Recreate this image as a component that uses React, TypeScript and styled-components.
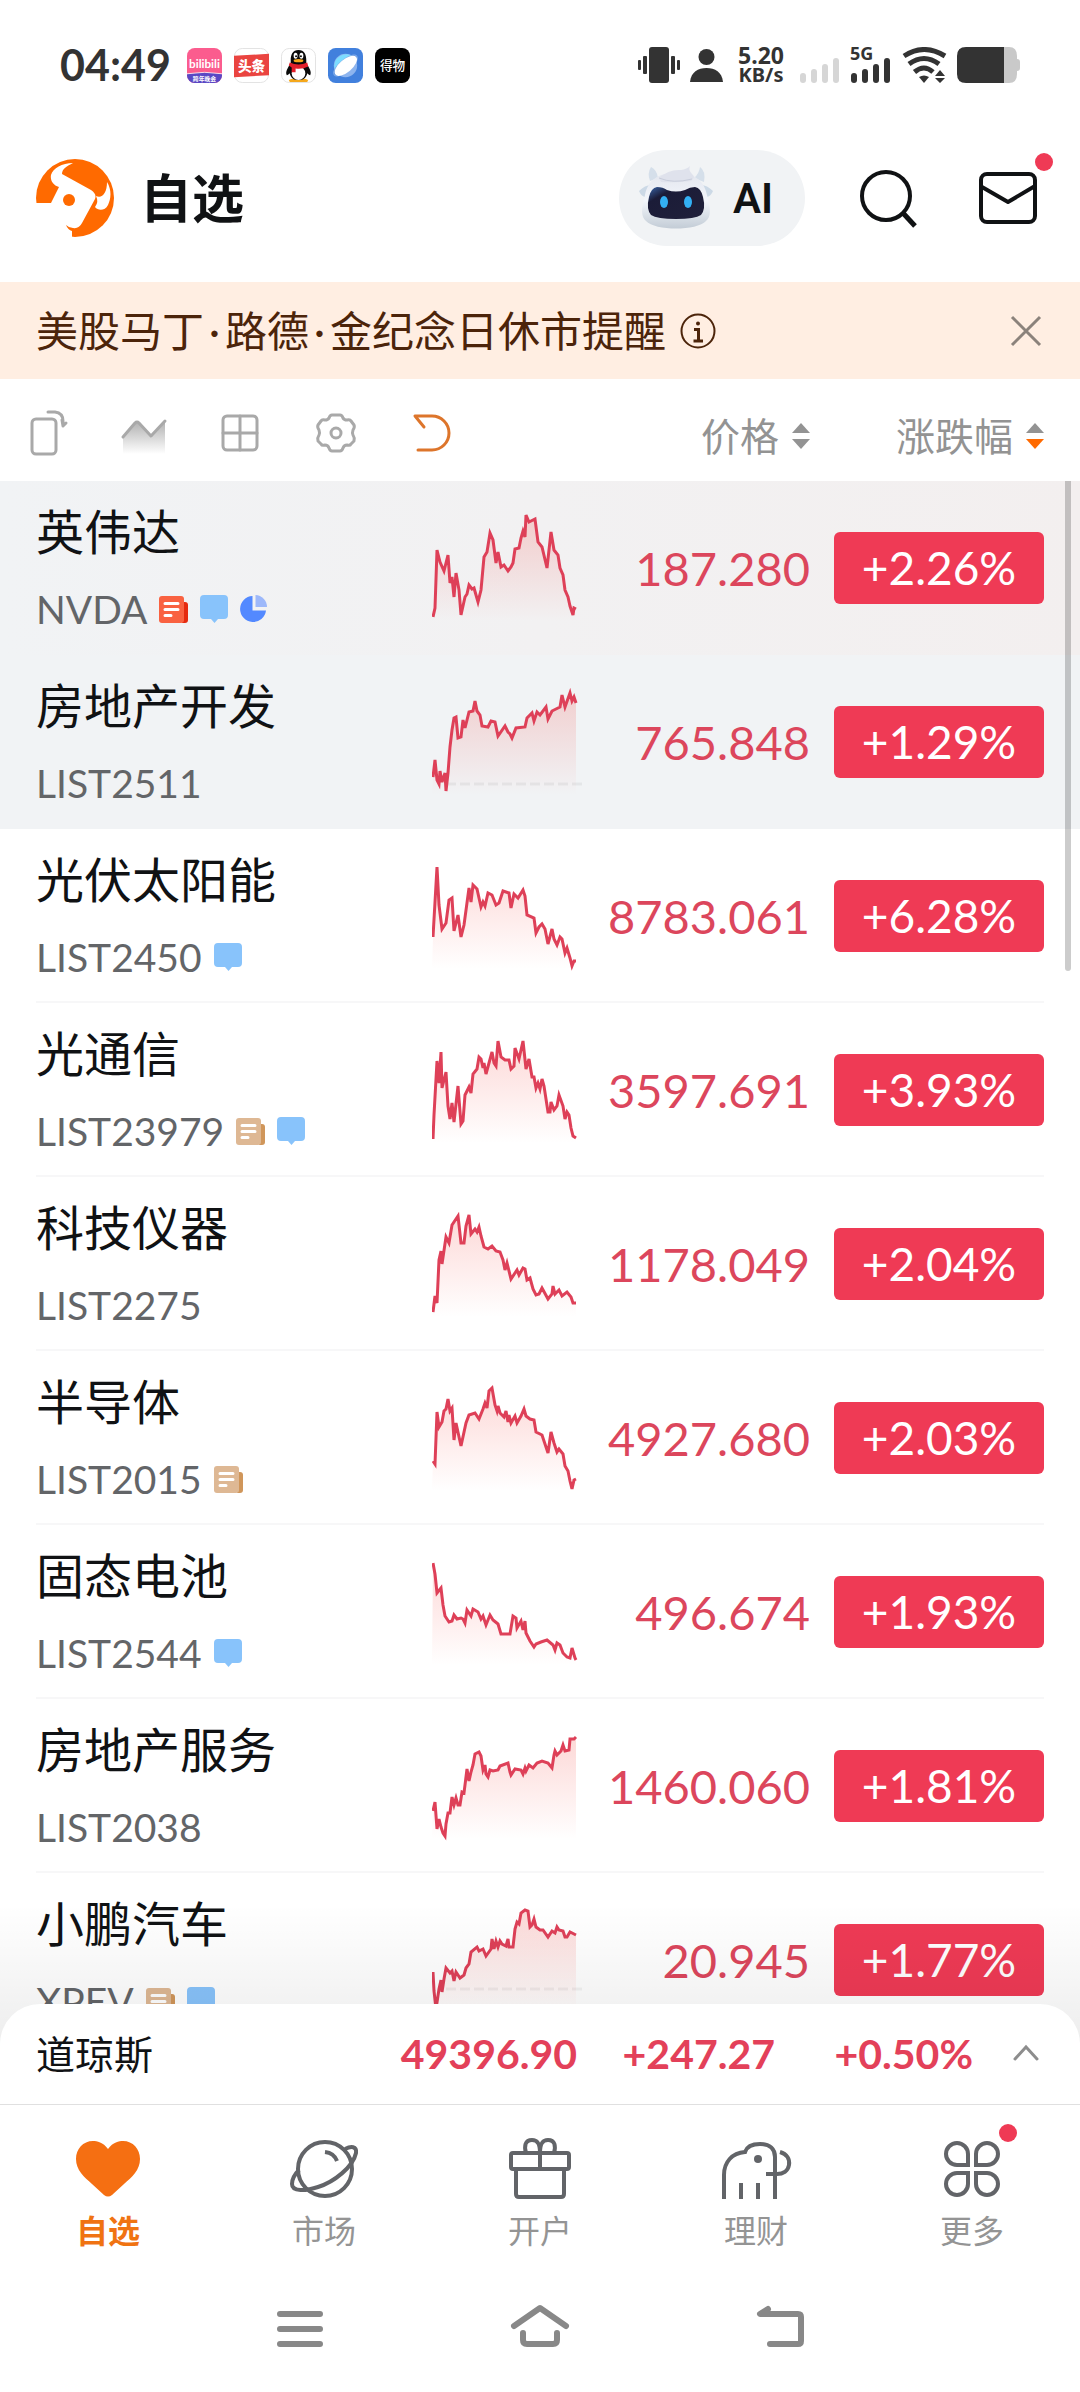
import React from "react";
import styled, { createGlobalStyle } from "styled-components";

const RED = "#ef3a55";
const PRICE_RED = "#dc465c";
const ORANGE = "#ff6a00";

const GlobalStyle = createGlobalStyle`
  * { box-sizing: border-box; }
  body {
    margin: 0;
    background: #fff;
    color: #101214;
    font-family: Lato, "Noto Sans CJK SC", sans-serif;
  }
  button {
    margin: 0;
    padding: 0;
    border: 0;
    background: none;
    color: inherit;
    font: inherit;
    cursor: pointer;
  }
  svg { display: block; flex: none; }
`;

const Page = styled.div`
  display: flex;
  flex-direction: column;
  height: 100vh;
  overflow: hidden;
`;

/* ---------- status bar ---------- */

const StatusBar = styled.div`
  display: flex;
  flex: none;
  align-items: center;
  justify-content: space-between;
  height: 130px;
  padding: 0 60px;
  color: #333;
`;

const StatusGroup = styled.div<{ $gap: number }>`
  display: flex;
  align-items: center;
  gap: ${(p) => p.$gap}px;
`;

const Clock = styled.time`
  margin-right: 4px;
  font-size: 43px;
  font-weight: 700;
  line-height: 48px;
`;

const Speed = styled.div`
  display: flex;
  flex-direction: column;
  width: 56px;
  font-family: "Noto Sans", sans-serif;
  font-weight: 700;
  line-height: 20px;
  text-align: center;
`;

const SpeedValue = styled.span`
  font-size: 23px;
`;

const SpeedUnit = styled.span`
  font-size: 20px;
`;

/* ---------- header ---------- */

const Header = styled.header`
  display: flex;
  flex: none;
  align-items: center;
  justify-content: space-between;
  padding: 20px 39px 36px 36px;
`;

const Brand = styled.div`
  display: flex;
  align-items: center;
  gap: 26px;
`;

const Title = styled.h1`
  margin: 0;
  font-size: 52px;
  font-weight: 700;
  line-height: 64px;
`;

const Actions = styled.div`
  display: flex;
  align-items: center;
  gap: 52px;
`;

const AiButton = styled.button`
  display: flex;
  align-items: center;
  gap: 20px;
  height: 96px;
  padding: 0 32px 0 20px;
  border-radius: 48px;
  background: #f1f3f5;
  font-family: Roboto, sans-serif;
  font-size: 42px;
  font-weight: 600;
`;

const IconButton = styled.button`
  position: relative;
  flex: none;
`;

const Dot = styled.span<{ $top: number; $right: number }>`
  position: absolute;
  top: ${(p) => p.$top}px;
  right: ${(p) => p.$right}px;
  width: 18px;
  height: 18px;
  border-radius: 50%;
  background: ${RED};
`;

/* ---------- notice ---------- */

const Notice = styled.div`
  display: flex;
  flex: none;
  align-items: center;
  height: 97px;
  padding: 0 36px;
  background: #ffeee2;
  color: #4c240a;
`;

const NoticeText = styled.p`
  margin: 0 14px 0 0;
  font-size: 42px;
  line-height: 56px;
`;

const MidDot = styled.span`
  padding: 0 5px;
`;

const CloseButton = styled.button`
  margin-left: auto;
`;

/* ---------- quote table ---------- */

const ListArea = styled.main`
  position: relative;
  flex: 1 1 0;
  min-height: 0;
  overflow: hidden;
`;

const Table = styled.table`
  display: block;
  width: 100%;
`;

const Head = styled.thead`
  display: block;
`;

const Body = styled.tbody`
  display: block;
`;

const HeadRow = styled.tr`
  display: grid;
  grid-template-columns: minmax(0, 1fr) 252px 210px;
  align-items: center;
  height: 102px;
  padding: 0 36px 0 24px;
`;

const HeadCell = styled.th<{ $inset?: boolean }>`
  display: flex;
  justify-content: flex-end;
  padding: 12px ${(p) => (p.$inset ? 24 : 0)}px 0 0;
  color: #939393;
  font-size: 39px;
  font-weight: 400;
  line-height: 52px;
`;

const Tools = styled.th`
  display: flex;
  gap: 48px;
  padding: 4px 0 0;
`;

const SortButton = styled.button`
  display: flex;
  align-items: center;
  gap: 13px;
`;

const Row = styled.tr<{ $tone: "plain" | "pinned" | "active" }>`
  display: grid;
  grid-template-columns: minmax(0, 1fr) 150px 252px 210px;
  align-items: center;
  height: 174px;
  padding: 0 36px;
  background: ${(p) =>
    p.$tone === "active"
      ? "linear-gradient(90deg, #f1f3f5, #f3efef)"
      : p.$tone === "pinned"
        ? "#f1f3f5"
        : "linear-gradient(#f7f7f8, #f7f7f8) bottom / 100% 2px no-repeat content-box"};
`;

const NameCell = styled.th`
  padding: 0;
  font-weight: 400;
  text-align: left;
`;

const Name = styled.div`
  font-size: 48px;
  line-height: 66px;
`;

const CodeLine = styled.div`
  display: flex;
  align-items: center;
  gap: 12px;
  margin-top: 16px;
  color: #636568;
  font-size: 39px;
  line-height: 56px;
`;

const Cell = styled.td`
  padding: 0;
`;

const Price = styled.td`
  padding: 0 24px 0 0;
  color: ${PRICE_RED};
  font-size: 47px;
  line-height: 56px;
  text-align: right;
`;

const Change = styled.span`
  display: block;
  height: 72px;
  border-radius: 6px;
  background: ${RED};
  color: #fff;
  font-size: 46px;
  line-height: 72px;
  text-align: center;
`;

const ScrollThumb = styled.div`
  position: absolute;
  top: 102px;
  right: 9px;
  width: 6px;
  height: 490px;
  border-radius: 0 0 3px 3px;
  background: rgba(0, 0, 0, 0.2);
`;

const Fade = styled.div`
  position: absolute;
  right: 0;
  bottom: 0;
  left: 0;
  height: 140px;
  background: linear-gradient(rgba(0, 0, 0, 0), rgba(0, 0, 0, 0.07));
`;

/* ---------- index strip ---------- */

const IndexStrip = styled.section`
  position: relative;
  display: grid;
  flex: none;
  grid-template-columns: minmax(0, 1fr) auto 198px 198px 71px;
  align-items: center;
  height: 100px;
  margin-top: -40px;
  padding: 0 36px;
  border-radius: 40px 40px 0 0;
  background: #fff;
  font-size: 39px;
  line-height: 52px;
`;

const IndexValue = styled.span`
  color: #e34059;
  font-size: 41px;
  font-weight: 700;
  text-align: right;
`;

const ExpandButton = styled.button`
  justify-self: end;
`;

/* ---------- bottom bars ---------- */

const TabBar = styled.nav`
  display: grid;
  flex: none;
  grid-template-columns: repeat(5, 1fr);
  padding-top: 32px;
  border-top: 1px solid #e0e0e0;
`;

const Tab = styled.button<{ $active?: boolean }>`
  display: flex;
  flex-direction: column;
  align-items: center;
  gap: 9px;
  color: ${(p) => (p.$active ? "#f07312" : "#949494")};
  font-size: 32px;
  font-weight: ${(p) => (p.$active ? 700 : 400)};
  line-height: 40px;
`;

const TabIcon = styled.span`
  position: relative;
`;

const SystemNav = styled.nav`
  display: flex;
  flex: none;
  justify-content: center;
  gap: 180px;
  padding: 51px 0 42px;
`;

/* ---------- drawings ---------- */

const AppTile = ({ children, label }: { children: React.ReactNode; label: string }) => (
  <svg width="35" height="35" viewBox="0 0 36 36" role="img" aria-label={label}>
    {children}
  </svg>
);

const tileFont = '"Noto Sans CJK SC", sans-serif';

const AppIcons = () => (
  <>
    <AppTile label="bilibili">
      <defs>
        <clipPath id="tile"><rect width="36" height="36" rx="8" /></clipPath>
      </defs>
      <g clipPath="url(#tile)">
        <rect width="36" height="36" fill="#fb5c8e" />
        <path d="M0 27Q18 24 36 27V36H0Z" fill="#5a48c4" />
        <path d="M0 26.500Q18 23.500 36 26.500" stroke="#fff" fill="none" strokeWidth="0.800" />
        <text x="18" y="21" fontSize="12" fontWeight="700" textAnchor="middle" fill="#fff" fontFamily="Lato">bilibili</text>
        <text x="18" y="34" fontSize="6" fontWeight="700" textAnchor="middle" fill="#fff" fontFamily={tileFont}>跨年晚会</text>
      </g>
    </AppTile>
    <AppTile label="头条">
      <rect x="0.500" y="0.500" width="35" height="35" rx="8" fill="#fff" stroke="#e2e2e2" />
      <path d="M0 8L36 6V28L0 30Z" fill="#ea4440" />
      <text x="18" y="24" fontSize="14" fontWeight="900" textAnchor="middle" fill="#fff" fontFamily={tileFont}>头条</text>
    </AppTile>
    <AppTile label="QQ">
      <rect x="0.500" y="0.500" width="35" height="35" rx="8" fill="#fff" stroke="#e2e2e2" />
      <path d="M8 33Q13 30 18 33Q23 30 28 33L27 35H9Z" fill="#f5a81c" />
      <path d="M18 2C12 2 10 7 10 12V16C7 20 4 25 6 28C7 28 8 27 9 26C10 31 13 33 18 33S26 31 27 26C28 27 29 28 30 28C32 25 29 20 26 16V12C26 7 24 2 18 2Z" fill="#0a0a0a" />
      <ellipse cx="18" cy="26" rx="7" ry="7" fill="#fff" />
      <ellipse cx="15" cy="8" rx="2" ry="3" fill="#fff" />
      <ellipse cx="21" cy="8" rx="2" ry="3" fill="#fff" />
      <circle cx="15.500" cy="8.500" r="1" />
      <circle cx="20.500" cy="8.500" r="1" />
      <ellipse cx="18" cy="13" rx="5" ry="1.600" fill="#f5a81c" />
      <path d="M9 15Q18 19 27 15L28 19Q22 22 15 21V25H11V20L8 18Z" fill="#e3202b" />
    </AppTile>
    <AppTile label="浏览器">
      <rect width="36" height="36" rx="8" fill="#4180dd" />
      <circle cx="18" cy="18" r="12" fill="#8db4ee" />
      <path d="M7 22A12 12 0 0 1 27 10Z" fill="#7cdcff" />
      <ellipse cx="18" cy="18" rx="15" ry="6" fill="none" stroke="#84aee9" transform="rotate(-40 18 18)" />
      <ellipse cx="18" cy="18.500" rx="14" ry="6.500" fill="#fff" transform="rotate(-40 18 18)" />
    </AppTile>
    <AppTile label="得物">
      <rect width="36" height="36" rx="8" fill="#000" />
      <text x="18" y="23" fontSize="13" fontWeight="500" textAnchor="middle" fill="#fff" fontFamily={tileFont}>得物</text>
    </AppTile>
  </>
);

const Bars = ({ color }: { color: string }) => (
  <g fill={color}>
    <rect x="1" y="26" width="6" height="10" rx="3" />
    <rect x="12" y="22" width="6" height="14" rx="3" />
    <rect x="23" y="17" width="6" height="19" rx="3" />
    <rect x="34" y="11" width="6" height="25" rx="3" />
  </g>
);

const SystemIcons = () => (
  <>
    <svg width="42" height="36" viewBox="0 0 42 36" fill="#333" aria-hidden="true">
      <rect x="11" width="20" height="36" rx="3" />
      <rect x="5" y="9" width="4" height="18" rx="1" />
      <rect x="33" y="9" width="4" height="18" rx="1" />
      <rect y="13" width="3" height="10" rx="1" />
      <rect x="39" y="13" width="3" height="10" rx="1" />
    </svg>
    <svg width="33" height="36" viewBox="0 0 33 36" fill="#333" aria-hidden="true">
      <circle cx="16.500" cy="10" r="8" />
      <path d="M0 35C1 25 8 21 16.500 21S32 25 33 35Z" />
    </svg>
    <Speed>
      <SpeedValue>5.20</SpeedValue>
      <SpeedUnit>KB/s</SpeedUnit>
    </Speed>
    <svg width="41" height="36" viewBox="0 0 41 36" aria-hidden="true"><Bars color="#d6d6d6" /></svg>
    <svg width="42" height="44" viewBox="0 -4 42 44" aria-hidden="true">
      <text x="0" y="13" fontSize="18" fontWeight="700" fill="#333" fontFamily="Noto Sans">5G</text>
      <Bars color="#333" />
    </svg>
    <svg width="45" height="36" viewBox="0 0 45 36" fill="none" stroke="#333" strokeWidth="5" aria-hidden="true">
      <path d="M2 9Q22 -4 43 9M7 17Q22 6 37 17M12.500 25Q22 17 31 25" />
      <path d="M17 30Q22 27 27 30L22 36Z" fill="#333" stroke="none" />
      <path d="M38 23L43 29H33ZM33 31H43L38 36Z" fill="#333" stroke="none" />
    </svg>
    <svg width="63" height="36" viewBox="0 0 63 36" aria-label="电量" role="img">
      <path d="M47 0H52Q60 0 60 9V12Q63 12 63 15V21Q63 24 60 24V27Q60 36 52 36H47Z" fill="#c9c9c9" />
      <path d="M9 0H47V36H9Q0 36 0 27V9Q0 0 9 0Z" fill="#333" />
    </svg>
  </>
);

const Logo = () => (
  <svg width="78" height="78" viewBox="0 0 78 78" role="img" aria-label="logo">
    <circle cx="39" cy="39" r="39" fill={ORANGE} />
    <path d="M-1 44H15L23 28C17 26 14 21 15 16C17 9 26 4 37 4C31 7 26 10 26 15L55 31Q61 35 59 40L46 64Q43 70 37 69Q33 69 30 66Q32 71 36 72V79H-1Z" fill="#fff" />
    <path d="M71 23C76 31 75 40 72 46C69 52 62 52 59 48Q63 43 60 37C66 40 71 34 71 23Z" fill="#fff" />
    <circle cx="33" cy="41" r="6" fill={ORANGE} />
  </svg>
);

const Robot = () => (
  <svg width="74" height="66" viewBox="0 0 74 66" aria-hidden="true">
    <defs>
      <linearGradient id="shell" x1="0" y1="0" x2="0" y2="1">
        <stop offset="0" stopColor="#e3e6ee" />
        <stop offset="0.500" stopColor="#f3f6fb" />
        <stop offset="1" stopColor="#c3ccd6" />
      </linearGradient>
      <linearGradient id="visor" x1="0" y1="0" x2="1" y2="1">
        <stop offset="0" stopColor="#3a67ab" />
        <stop offset="0.250" stopColor="#1b1c38" />
        <stop offset="1" stopColor="#20203a" />
      </linearGradient>
    </defs>
    <path d="M11 16Q8 8 12 2Q18 5 19 13ZM55 13Q60 9 61 2Q67 6 65 17Z" fill="#d5dfea" />
    <path d="M0 26Q6 20 12 20L6 32Q2 31 0 26ZM74 26Q68 20 62 20L68 32Q72 31 74 26Z" fill="#ccd9e6" />
    <path d="M37 8C55 8 65 15 68 30C72 44 72 52 67 56C58 66 16 66 7 56C2 52 2 44 6 30C9 15 19 8 37 8Z" fill="url(#shell)" />
    <path d="M20 13Q30 4 42 5Q48 4 51 1Q49 5 53 9Q57 12 52 16Q36 18 22 17Z" fill="#dfe2ec" />
    <path d="M20 13Q34 19 53 14" fill="none" stroke="#c8cddb" />
    <path d="M18 22Q24 22 28 25Q37 28 46 25Q51 22 56 22Q62 23 64 32Q67 44 62 50Q56 54 37 54Q18 54 12 50Q7 44 10 32Q12 23 18 22Z" fill="url(#visor)" />
    <ellipse cx="25" cy="37" rx="4" ry="6" fill="#33b0f3" />
    <ellipse cx="49" cy="37" rx="4" ry="6" fill="#33b0f3" />
  </svg>
);

const ToolIcon = ({ color = "#a9a9a9", children }: { color?: string; children: React.ReactNode }) => (
  <svg width="48" height="48" viewBox="0 0 48 48" fill="none" stroke={color} strokeWidth="3" strokeLinecap="round" strokeLinejoin="round" aria-hidden="true">
    {children}
  </svg>
);

const SortArrows = ({ down }: { down?: boolean }) => (
  <svg width="18" height="28" viewBox="0 0 18 28" aria-hidden="true">
    <path d="M9 1L18 11H0Z" fill="#939393" />
    <path d="M0 17H18L9 27Z" fill={down ? ORANGE : "#939393"} />
  </svg>
);

type Mark = "hot" | "news" | "chat" | "pie";

const MarkIcon = ({ kind }: { kind: Mark }) => {
  if (kind === "chat") {
    return (
      <svg width="28" height="28" viewBox="0 0 28 28" aria-hidden="true">
        <path d="M4 0H24Q28 0 28 4V20Q28 24 24 24H18L14.500 28L11 24H4Q0 24 0 20V4Q0 0 4 0Z" fill="#88c3fb" />
      </svg>
    );
  }
  if (kind === "pie") {
    return (
      <svg width="28" height="28" viewBox="0 0 28 28" aria-hidden="true">
        <path d="M12.500 1V15.500H26A13 13 0 1 1 12.500 1Z" fill="#5389ff" />
        <path d="M15.500 0A12 12 0 0 1 27 12H15.500Z" fill="#9db8fa" />
      </svg>
    );
  }
  const hot = kind === "hot";
  return (
    <svg width="29" height="28" viewBox="0 0 29 28" aria-hidden="true">
      <path d="M23 7H26Q29 7 29 10V25Q29 28 26 28H23Z" fill={hot ? "#e52b10" : "#d0965a"} />
      <rect y="1" width="25" height="27" rx="3" fill={hot ? "#f96241" : "#deb894"} />
      <path d="M6 8.500H19M6 14.500H19M6 20.500H12" stroke="#fff" strokeWidth="3" strokeLinecap="round" />
    </svg>
  );
};

const Spark = ({ points, base }: { points: string; base?: number }) => (
  <svg width="150" height="114" viewBox="0 0 150 114" aria-hidden="true">
    <defs>
      <linearGradient id="area" gradientUnits="userSpaceOnUse" x1="0" y1="0" x2="0" y2="110">
        <stop offset="0" stopColor="#f4413a" stopOpacity="0.220" />
        <stop offset="1" stopColor="#f4413a" stopOpacity="0" />
      </linearGradient>
    </defs>
    <polygon points={`0,110 ${points} 144,110`} fill="url(#area)" />
    {base && <path d={`M14 ${base}H150`} stroke="#000" strokeOpacity="0.050" strokeWidth="3" strokeDasharray="10 4" />}
    <polyline points={points} fill="none" stroke="#de4058" strokeWidth="3" strokeLinejoin="miter" />
  </svg>
);

const TabSvg = ({ children }: { children: React.ReactNode }) => (
  <svg width="72" height="65" viewBox="0 0 72 65" fill="none" stroke="#626468" strokeWidth="4" aria-hidden="true">
    {children}
  </svg>
);

const NavSvg = ({ children }: { children: React.ReactNode }) => (
  <svg width="60" height="48" viewBox="0 0 60 48" fill="none" stroke="#888" strokeWidth="6" strokeLinecap="round" strokeLinejoin="round" aria-hidden="true">
    {children}
  </svg>
);

/* ---------- data ---------- */

type Quote = {
  name: string;
  code: string;
  price: string;
  change: string;
  marks: Mark[];
  tone?: "pinned" | "active";
  base?: number;
  points: string;
};

const quotes: Quote[] = [
  {
    name: "英伟达", code: "NVDA", price: "187.280", change: "+2.26%", marks: ["hot", "chat", "pie"], tone: "active",
    points: "1,106 3,97 5,39 8,51 12,60 16,44 18,72 20,66 22,86 24,62 27,79 29,104 33,86 35,83 37,74 40,78 42,77 46,91 49,79 52,46 55,41 58,22 61,29 64,52 66,41 69,56 72,54 76,60 79,56 81,52 83,38 87,37 89,27 91,20 93,26 94,4 97,11 103,8 106,31 110,36 115,57 119,21 122,39 126,44 128,57 131,64 133,79 136,86 138,95 141,104 142,97 144,98",
  },
  {
    name: "房地产开发", code: "LIST2511", price: "765.848", change: "+1.29%", marks: [], tone: "pinned", base: 99,
    points: "1,92 3,75 5,95 7,99 8,86 10,97 13,88 14,106 16,88 18,62 20,45 22,33 24,32 26,53 29,52 31,35 33,43 37,27 41,26 43,16 45,26 48,30 50,41 56,42 59,36 63,37 66,51 73,41 76,47 78,49 80,53 84,43 93,42 95,33 100,28 102,36 105,27 108,30 114,22 116,34 120,26 126,23 128,22 130,10 133,22 138,8 140,16 142,12 144,18",
  },
  {
    name: "光伏太阳能", code: "LIST2450", price: "8783.061", change: "+6.28%", marks: ["chat"],
    points: "1,78 5,8 7,46 10,70 14,64 17,41 20,39 22,72 26,56 29,78 32,66 37,29 39,43 41,26 45,30 49,48 51,43 53,47 56,34 60,36 64,46 67,44 71,32 77,34 79,49 82,35 86,39 91,31 93,37 95,56 102,59 104,74 107,68 110,65 113,70 116,85 120,70 122,80 125,86 128,78 130,80 133,94 135,89 138,99 140,107 142,102 144,102",
  },
  {
    name: "光通信", code: "LIST23979", price: "3597.691", change: "+3.93%", marks: ["news", "chat"],
    points: "1,106 2,82 5,28 7,50 9,19 10,55 14,39 16,73 18,86 20,70 22,89 26,53 29,91 31,88 33,62 37,54 39,60 41,41 45,36 47,24 49,26 51,35 52,30 54,41 60,19 62,30 64,33 66,8 69,24 73,27 77,27 79,36 82,33 83,15 87,26 91,8 94,36 97,26 100,44 102,44 104,55 106,50 108,56 110,46 112,53 116,79 118,79 119,69 122,77 125,73 127,62 131,73 133,86 135,79 137,82 139,95 141,103 144,105",
  },
  {
    name: "科技仪器", code: "LIST2275", price: "1178.049", change: "+2.04%", marks: [],
    points: "1,105 3,89 5,96 7,53 9,44 10,57 14,30 17,36 20,18 26,9 29,36 32,36 34,19 37,8 39,27 43,22 45,25 47,20 49,29 52,40 56,42 60,39 64,44 68,45 71,53 73,63 75,56 79,72 85,63 87,68 91,61 93,62 95,73 98,71 101,82 104,88 107,87 110,81 116,92 120,87 121,79 123,87 127,83 130,89 135,85 139,90 141,96 144,96",
  },
  {
    name: "半导体", code: "LIST2015", price: "4927.680", change: "+2.03%", marks: ["news"],
    points: "1,80 3,83 5,31 7,46 10,41 12,30 14,28 16,18 18,30 20,27 22,59 24,42 29,65 34,42 37,34 43,32 47,38 51,28 53,22 55,27 57,10 60,7 63,24 65,30 66,25 68,32 70,34 72,36 74,30 76,41 77,34 79,42 83,35 85,42 89,35 92,28 94,35 98,38 102,39 104,51 110,54 116,72 119,51 122,62 125,71 127,68 131,73 133,85 136,90 138,100 140,108 142,99 144,98",
  },
  {
    name: "固态电池", code: "LIST2544", price: "496.674", change: "+1.93%", marks: ["chat"],
    points: "1,8 3,19 5,38 9,33 11,50 13,61 17,67 20,66 22,60 25,64 29,63 31,64 33,68 35,55 39,61 41,54 46,57 49,64 51,61 54,70 58,60 61,65 66,69 69,79 78,79 81,61 84,63 85,73 89,66 91,75 93,66 94,78 98,86 102,92 104,89 109,87 115,85 121,90 123,95 125,88 128,90 131,98 135,102 138,103 140,93 143,103 144,105",
  },
  {
    name: "房地产服务", code: "LIST2038", price: "1460.060", change: "+1.81%", marks: [],
    points: "1,82 3,73 5,100 7,90 9,98 11,104 13,107 14,95 16,84 18,84 20,68 22,76 24,69 26,76 28,76 30,63 32,64 35,40 37,52 39,43 41,36 43,25 47,23 49,27 51,41 53,36 54,45 56,48 58,41 61,42 66,41 68,37 76,34 78,43 79,46 83,40 89,41 91,45 93,39 94,42 97,36 101,39 105,34 110,32 116,34 120,39 122,26 123,22 125,26 129,22 131,16 133,22 137,21 138,10 142,10 144,8",
  },
  {
    name: "小鹏汽车", code: "XPEV", price: "20.945", change: "+1.77%", marks: ["news", "chat"], base: 86,
    points: "1,69 2,88 4,106 7,86 9,77 10,89 12,76 14,65 18,70 20,68 22,78 24,69 28,75 32,72 34,65 37,61 39,49 45,44 47,48 51,46 54,53 59,46 60,36 62,46 64,38 66,44 68,38 70,41 74,43 76,36 77,44 81,44 83,26 85,19 87,21 89,10 93,7 96,8 98,24 100,22 102,16 104,24 108,27 111,27 116,34 120,28 123,30 125,24 127,27 131,28 133,34 135,34 138,29 144,32",
  },
];

/* ---------- page ---------- */

export default function App() {
  return (
    <Page>
      <GlobalStyle />
      <StatusBar>
        <StatusGroup $gap={12}>
          <Clock>04:49</Clock>
          <AppIcons />
        </StatusGroup>
        <StatusGroup $gap={10}>
          <SystemIcons />
        </StatusGroup>
      </StatusBar>

      <Header>
        <Brand>
          <Logo />
          <Title>自选</Title>
        </Brand>
        <Actions>
          <AiButton type="button">
            <Robot />
            AI
          </AiButton>
          <IconButton type="button" aria-label="搜索">
            <svg width="66" height="66" viewBox="0 0 66 66" fill="none" stroke="#101214" strokeWidth="4">
              <circle cx="29" cy="31" r="24" />
              <path d="M46 48L58 61" strokeWidth="5" />
            </svg>
          </IconButton>
          <IconButton type="button" aria-label="消息">
            <svg width="66" height="66" viewBox="0 0 66 66" fill="none" stroke="#101214" strokeWidth="4" strokeLinejoin="round">
              <rect x="6" y="9" width="54" height="48" rx="6" />
              <path d="M7 22L33 37L60 21" />
            </svg>
            <Dot $top={-12} $right={-12} />
          </IconButton>
        </Actions>
      </Header>

      <Notice role="status">
        <NoticeText>
          美股马丁<MidDot>·</MidDot>路德<MidDot>·</MidDot>金纪念日休市提醒
        </NoticeText>
        <svg width="36" height="36" viewBox="0 0 36 36" fill="none" stroke="#4c240a" strokeWidth="3" aria-hidden="true">
          <circle cx="18" cy="18" r="16.500" strokeWidth="2" />
          <path d="M14 16.500H18.500V28M13.500 28H23" />
          <circle cx="18" cy="10.500" r="2" fill="#4c240a" stroke="none" />
        </svg>
        <CloseButton type="button" aria-label="关闭">
          <svg width="36" height="36" viewBox="0 0 36 36" fill="none" stroke="#8b827b" strokeWidth="3">
            <path d="M4 4L32 32M32 4L4 32" />
          </svg>
        </CloseButton>
      </Notice>

      <ListArea>
        <Table>
          <Head>
            <HeadRow>
              <Tools scope="col">
                <button type="button" aria-label="横屏">
                  <ToolIcon>
                    <rect x="8" y="11" width="24" height="35" rx="4" />
                    <path d="M24 4H31Q39 5 39 13V18M39 18L42 15M39 18L38 12" />
                  </ToolIcon>
                </button>
                <button type="button" aria-label="走势">
                  <ToolIcon>
                    <defs>
                      <linearGradient id="hill" x1="0" y1="0" x2="0" y2="1">
                        <stop offset="0" stopColor="#b0b0b0" />
                        <stop offset="1" stopColor="#fff" />
                      </linearGradient>
                    </defs>
                    <path d="M3 29L17 14L31 28L45 13V46H3Z" fill="url(#hill)" stroke="none" />
                    <path d="M3 29L15 15Q17 13 19 15L31 28L45 13" />
                  </ToolIcon>
                </button>
                <button type="button" aria-label="宫格">
                  <ToolIcon>
                    <rect x="7" y="8" width="34" height="34" rx="4" />
                    <path d="M24 8V42M7 25H41" />
                  </ToolIcon>
                </button>
                <button type="button" aria-label="设置">
                  <ToolIcon>
                    <path d="M20 7H28Q30 7 31 10Q32 12 35 12Q38 11 39 13L42 17Q43 19 41 22Q40 25 41 27Q43 30 42 33L39 36Q38 38 35 37Q32 37 31 40Q30 43 28 43H20Q18 43 17 40Q16 37 13 37Q10 38 9 36L6 33Q5 30 7 27Q8 25 7 22Q5 19 6 17L9 13Q10 11 13 12Q16 12 17 10Q18 7 20 7Z" />
                    <circle cx="24" cy="25" r="5" />
                  </ToolIcon>
                </button>
                <button type="button" aria-label="恢复排序">
                  <ToolIcon color="#dd752b">
                    <path d="M16 19L7 8H24A17 17 0 0 1 24 42H10" />
                  </ToolIcon>
                </button>
              </Tools>
              <HeadCell scope="col" $inset>
                <SortButton type="button">价格<SortArrows /></SortButton>
              </HeadCell>
              <HeadCell scope="col">
                <SortButton type="button">涨跌幅<SortArrows down /></SortButton>
              </HeadCell>
            </HeadRow>
          </Head>
          <Body>
            {quotes.map((q) => (
              <Row key={q.code} $tone={q.tone ?? "plain"}>
                <NameCell scope="row">
                  <Name>{q.name}</Name>
                  <CodeLine>
                    {q.code}
                    {q.marks.map((m) => <MarkIcon key={m} kind={m} />)}
                  </CodeLine>
                </NameCell>
                <Cell><Spark points={q.points} base={q.base} /></Cell>
                <Price>{q.price}</Price>
                <Cell><Change>{q.change}</Change></Cell>
              </Row>
            ))}
          </Body>
        </Table>
        <ScrollThumb />
        <Fade />
      </ListArea>

      <IndexStrip>
        <span>道琼斯</span>
        <IndexValue>49396.90</IndexValue>
        <IndexValue>+247.27</IndexValue>
        <IndexValue>+0.50%</IndexValue>
        <ExpandButton type="button" aria-label="展开">
          <svg width="36" height="36" viewBox="0 0 36 36" fill="none" stroke="#8d8d8d" strokeWidth="3" strokeLinecap="round">
            <path d="M7 23L18 11L29 23" />
          </svg>
        </ExpandButton>
      </IndexStrip>

      <TabBar>
        <Tab type="button" $active>
          <TabSvg>
            <path d="M36 12C41 5 47 4 51 4C61 4 68 12 68 22C68 33 60 40 52 47L40 58Q36 61 32 58L20 47C12 40 4 33 4 22C4 12 11 4 21 4C25 4 31 5 36 12Z" fill="#f56f12" stroke="none" />
          </TabSvg>
          自选
        </Tab>
        <Tab type="button">
          <TabSvg>
            <circle cx="37" cy="32" r="27" />
            <path d="M57 12C63 9 69 9 68 16C65 30 46 45 30 50C18 54 4 55 4 47C4 42 8 36 11 33" />
            <path d="M37 15Q46 16 49 24" />
          </TabSvg>
          市场
        </Tab>
        <Tab type="button">
          <TabSvg>
            <rect x="7" y="16" width="58" height="16" rx="2" />
            <path d="M12 32V57Q12 60 15 60H57Q60 60 60 57V32M36 16V32" />
            <path d="M36 16C36 7 34 3 28 3C21 3 20 9 22 16M36 16C36 7 38 3 44 3C51 3 52 9 50 16" />
          </TabSvg>
          开户
        </Tab>
        <Tab type="button">
          <TabSvg>
            <path d="M4 62V38C4 25 12 16 25 15C27 9 32 7 40 7C50 7 55 12 55 20V62M21 46V62M38 46V62" />
            <path d="M60 15C67 17 70 22 69 28C68 34 63 37 57 37H46" />
            <circle cx="38" cy="22" r="4" fill="#626468" stroke="none" />
          </TabSvg>
          理财
        </Tab>
        <Tab type="button">
          <TabIcon>
            <TabSvg>
              <path d="M32 28H21A11 11 0 1 1 32 17ZM40 28H51A11 11 0 1 0 40 17ZM32 36H21A11 11 0 1 0 32 47ZM40 36H51A11 11 0 1 1 40 47Z" />
            </TabSvg>
            <Dot $top={-13} $right={-9} />
          </TabIcon>
          更多
        </Tab>
      </TabBar>

      <SystemNav>
        <button type="button" aria-label="最近任务">
          <NavSvg><path d="M10 12H50M10 27H50M10 42H50" /></NavSvg>
        </button>
        <button type="button" aria-label="主页">
          <NavSvg><path d="M4 24L30 6L56 24M13 31V38Q13 42 17 42H43Q47 42 47 38V31" /></NavSvg>
        </button>
        <button type="button" aria-label="返回">
          <NavSvg><path d="M18 7L10 12H48Q51 12 51 15V39Q51 42 48 42H20" /></NavSvg>
        </button>
      </SystemNav>
    </Page>
  );
}
